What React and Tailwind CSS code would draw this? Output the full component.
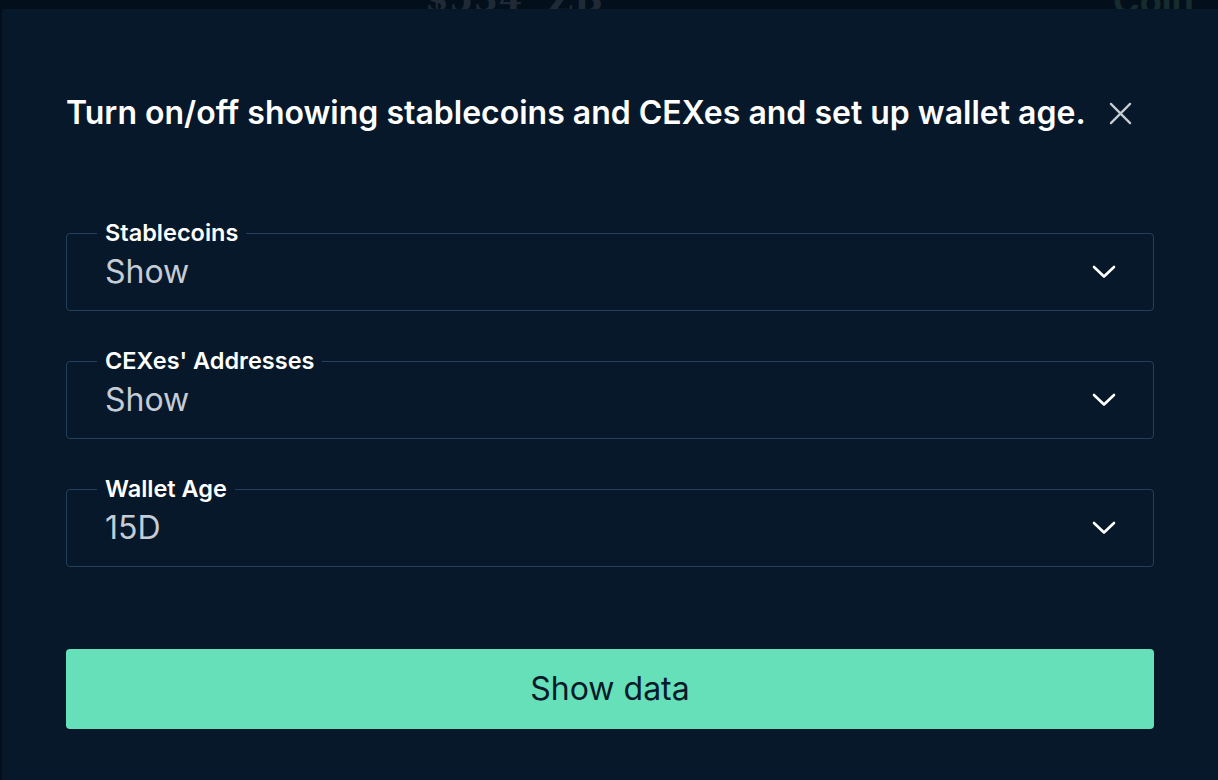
import React from "react";

function Chevron() {
  return (
    <svg width="24" height="14" viewBox="0 0 24 14" fill="none">
      <path d="M2 2L12 11.5L22 2" stroke="#ffffff" strokeWidth="2.6" strokeLinecap="round" strokeLinejoin="round" />
    </svg>
  );
}

function Field({ label, value }) {
  return (
    <fieldset className="border-[1.5px] border-[#223f60] rounded-[4px]">
      <legend className="ml-[30px] px-[8px] text-[23.5px] font-semibold text-white leading-[26px]">{label}</legend>
      <div className="h-[64px] pb-[12px] flex items-center justify-between pl-[38px] pr-[37px]">
        <span className="text-[32px] text-[#c5ccd5] leading-[36px]">{value}</span>
        <Chevron />
      </div>
    </fieldset>
  );
}

export default function App() {
  return (
    <div className="w-[1218px] h-[780px] bg-[#040f1c] overflow-hidden flex flex-col" style={{ fontFamily: "Inter, 'Noto Sans', sans-serif" }}>
      <div className="h-[9px] overflow-hidden relative shrink-0">
        <div className="absolute left-[425px] top-[-26px] text-[34px] font-bold text-[#1f2a36] tracking-wide" style={{ fontFamily: "'DejaVu Serif', serif" }}>$534&nbsp;&nbsp;ZB</div>
        <div className="absolute left-[1113px] top-[-26px] text-[36px] font-bold text-[#172c2e]">Coin</div>
      </div>
      <div className="flex-1 ml-[2px] bg-[#061829] rounded-tl-[3px] px-[64px] pt-[86px] flex flex-col">
        <div className="flex items-center justify-between pr-[22px]">
          <h2 className="text-[32px] font-semibold text-white leading-[36px] whitespace-nowrap">
            Turn on/off showing stablecoins and CEXes and set up wallet age.
          </h2>
          <svg width="23" height="23" viewBox="0 0 24 24" fill="none" className="shrink-0">
            <path d="M2 2L22 22M22 2L2 22" stroke="#c7ccd3" strokeWidth="2.4" strokeLinecap="round" />
          </svg>
        </div>
        <div className="mt-[89px] flex flex-col gap-[37px]">
          <Field label="Stablecoins" value="Show" />
          <Field label="CEXes' Addresses" value="Show" />
          <Field label="Wallet Age" value="15D" />
        </div>
        <button className="mt-[82px] h-[80px] rounded-[4px] bg-[#66e0b8] text-[32px] text-[#0a1a2a] w-full">
          Show data
        </button>
      </div>
    </div>
  );
}
